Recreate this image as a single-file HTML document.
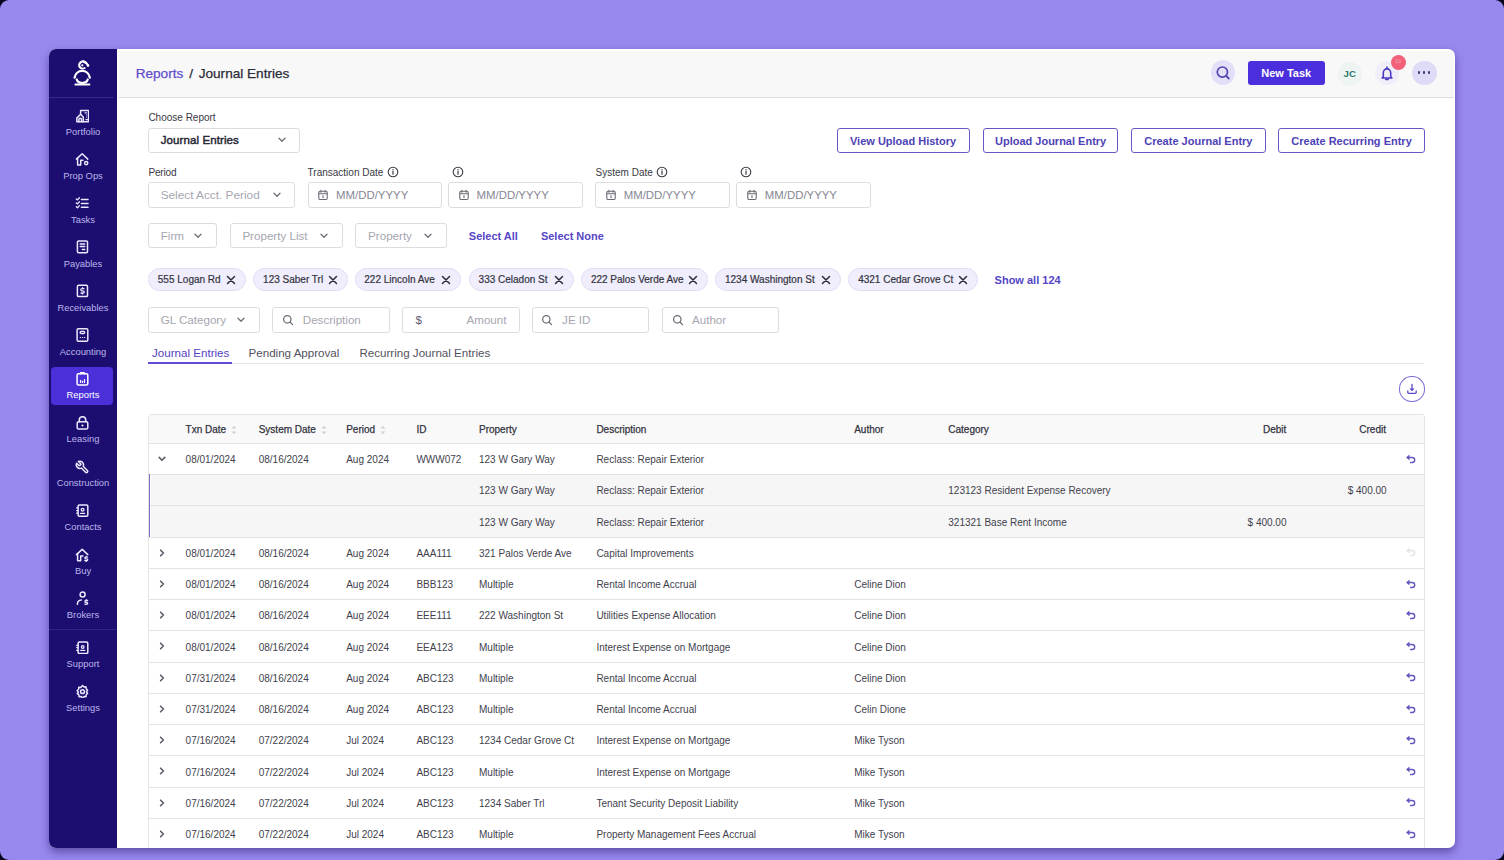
<!DOCTYPE html>
<html><head><meta charset="utf-8"><style>
*{box-sizing:border-box;margin:0;padding:0}
html{background:#08051e}
html,body{width:1504px;height:860px;overflow:hidden;}
body{background:#9889ef;border-radius:9px;font-family:"Liberation Sans",sans-serif;color:#2f2f3b}
.abs{position:absolute}
#frame{position:absolute;left:49px;top:49px;width:1406px;height:799px;border-radius:7px;overflow:hidden;background:#fff;box-shadow:0 4px 9px rgba(40,20,100,.5)}
.t{position:absolute;white-space:nowrap;line-height:1}
.box{position:absolute;border:1px solid #dcdcdc;border-radius:3px;background:#fff}
.fill{position:absolute}
</style></head><body>
<div id="frame">
<div class="fill" style="left:0px;top:0px;width:68px;height:799px;background:#1b0e70;border-radius:0"></div>
<div class="fill" style="left:0px;top:48px;width:64px;height:1px;background:#36298c"></div>
<div class="fill" style="left:0px;top:579.50px;width:68px;height:1px;background:#2f2388"></div>
<div class="fill" style="left:2px;top:318px;width:62px;height:38px;background:#4b30da;border-radius:4px"></div>
<svg class="abs" style="left:19px;top:7px;" width="28" height="34" viewBox="0 0 28 34" fill="none"><g stroke="#fff" stroke-width="2.1" stroke-linecap="round" fill="none">
<path d="M16.6 12 A3.5 3.5 0 1 1 17.4 6.9"/>
<path d="M14.6 5.3 C17 5.3 18.6 7 20 9.2"/>
<path d="M6.6 21.6 A7.7 8 0 0 1 21.8 21.6" stroke-width="2.3"/>
<path d="M8.7 23.4 A5.7 4.6 0 0 0 19.8 23.4" stroke-width="2.1"/>
<path d="M7.4 28.5 H21.4" stroke-width="2"/>
</g><circle cx="14.3" cy="9.3" r="1.1" fill="#fff"/><circle cx="20" cy="9.6" r="1.3" fill="#fff"/></svg>
<div class="t" style="left:-100px;width:268px;text-align:center;top:78.04px;font-size:9.4px;color:#bdb5ec">Portfolio</div>
<svg class="abs" style="left:26px;top:59.50px;" width="14" height="14" viewBox="0 0 14 14" fill="none"><g stroke="#ebe8ff" stroke-width="1.5" stroke-linecap="round" stroke-linejoin="round"><path d="M1.8 12.8V9.1L5.6 5.3V1.6h8v11.2z"/><path d="M3.9 12.8V10.6a1.3 1.3 0 0 1 2.6 0V12.8"/><path d="M5.6 5.3L8.3 8V12.8"/><path d="M10 3.8h.6M11.6 3.8h.1M11.7 5.9v.1M11.7 8v.1M10.9 10.5l.8.5.8-.5" stroke-width="1.2"/></g></svg>
<div class="t" style="left:-100px;width:268px;text-align:center;top:121.94px;font-size:9.4px;color:#bdb5ec">Prop Ops</div>
<svg class="abs" style="left:26px;top:103.40px;" width="14" height="14" viewBox="0 0 14 14" fill="none"><g stroke="#ebe8ff" stroke-width="1.5" stroke-linecap="round" stroke-linejoin="round"><path d="M1.4 7.1L7.2 1.8 12.8 7.1"/><path d="M2.6 6.2V13H5.7V8.3H8"/><circle cx="11.2" cy="11.1" r="1.6"/></g></svg>
<div class="t" style="left:-100px;width:268px;text-align:center;top:165.84px;font-size:9.4px;color:#bdb5ec">Tasks</div>
<svg class="abs" style="left:26px;top:147.30px;" width="14" height="14" viewBox="0 0 14 14" fill="none"><g stroke="#ebe8ff" stroke-width="1.5" stroke-linecap="round" stroke-linejoin="round"><path d="M6.4 3.4H13M6.4 7.4H13M6.4 11.2H13"/><path d="M1.3 2.9l1.2 1 1.9-2.1M1.3 6.9l1.2 1 1.9-2.1M1.3 10.7l1.2 1 1.9-2.1" stroke-width="1.3"/></g></svg>
<div class="t" style="left:-100px;width:268px;text-align:center;top:209.74px;font-size:9.4px;color:#bdb5ec">Payables</div>
<svg class="abs" style="left:26px;top:191.20px;" width="14" height="14" viewBox="0 0 14 14" fill="none"><g stroke="#ebe8ff" stroke-width="1.5" stroke-linecap="round" stroke-linejoin="round"><rect x="2.4" y="0.9" width="10.1" height="11.8" rx="1.2"/><path d="M5.2 4.1h4.5M5.2 6.6h4.5M7.3 9.4h2.4"/></g></svg>
<div class="t" style="left:-100px;width:268px;text-align:center;top:253.64px;font-size:9.4px;color:#bdb5ec">Receivables</div>
<svg class="abs" style="left:26px;top:235.10px;" width="14" height="14" viewBox="0 0 14 14" fill="none"><g stroke="#ebe8ff" stroke-width="1.5" stroke-linecap="round" stroke-linejoin="round"><rect x="2.4" y="1.2" width="10.1" height="11.4" rx="1.2"/><path d="M9 4.6H6.9a1.1 1.1 0 0 0 0 2.2h1.2a1.1 1.1 0 0 1 0 2.2H6M7.5 3.6v.9M7.5 9v.9" stroke-width="1.3"/></g></svg>
<div class="t" style="left:-100px;width:268px;text-align:center;top:297.54px;font-size:9.4px;color:#bdb5ec">Accounting</div>
<svg class="abs" style="left:26px;top:279px;" width="14" height="14" viewBox="0 0 14 14" fill="none"><g stroke="#ebe8ff" stroke-width="1.5" stroke-linecap="round" stroke-linejoin="round"><rect x="2.1" y="0.8" width="10.7" height="12.4" rx="1.3"/><rect x="5.1" y="3.5" width="4.6" height="2.1" rx="1" stroke-width="1.3"/><path d="M5.2 9.5h.3M7.4 9.5h.3M9.5 9.5h.3" stroke-width="1.2"/></g></svg>
<div class="t" style="left:-100px;width:268px;text-align:center;top:341.44px;font-size:9.4px;color:#fff">Reports</div>
<svg class="abs" style="left:26px;top:322.90px;" width="14" height="14" viewBox="0 0 14 14" fill="none"><g stroke="#fff" stroke-width="1.5" stroke-linecap="round" stroke-linejoin="round"><rect x="2.1" y="1.8" width="10.7" height="11.3" rx="1.4"/><path d="M5.6 1.8V.8h3.6v1"/><path d="M5.5 10.5V8.3M7.5 10.5V9M9.5 10.5V7.6" stroke-width="1.2"/></g></svg>
<div class="t" style="left:-100px;width:268px;text-align:center;top:385.34px;font-size:9.4px;color:#bdb5ec">Leasing</div>
<svg class="abs" style="left:26px;top:366.80px;" width="14" height="14" viewBox="0 0 14 14" fill="none"><g stroke="#ebe8ff" stroke-width="1.5" stroke-linecap="round" stroke-linejoin="round"><path d="M4.3 5.8V3.9a3.2 3.2 0 0 1 6.4 0v1.9"/><rect x="2.2" y="5.8" width="10.6" height="7.3" rx="1.4"/><circle cx="7.5" cy="9.5" r="1" fill="#fff" stroke="none"/></g></svg>
<div class="t" style="left:-100px;width:268px;text-align:center;top:429.24px;font-size:9.4px;color:#bdb5ec">Construction</div>
<svg class="abs" style="left:26px;top:410.70px;" width="14" height="14" viewBox="0 0 14 14" fill="none"><g stroke="#ebe8ff" stroke-width="1.5" stroke-linecap="round" stroke-linejoin="round"><g transform="translate(14.5,0) scale(-0.6,0.6)"><path d="M14.7 6.3a1 1 0 0 0 0 1.4l1.6 1.6a1 1 0 0 0 1.4 0l3.77-3.77a6 6 0 0 1-7.94 7.94l-6.91 6.91a2.12 2.12 0 0 1-3-3l6.91-6.91a6 6 0 0 1 7.94-7.94l-3.76 3.76z" stroke-width="2.5"/></g></g></svg>
<div class="t" style="left:-100px;width:268px;text-align:center;top:473.14px;font-size:9.4px;color:#bdb5ec">Contacts</div>
<svg class="abs" style="left:26px;top:454.60px;" width="14" height="14" viewBox="0 0 14 14" fill="none"><g stroke="#ebe8ff" stroke-width="1.5" stroke-linecap="round" stroke-linejoin="round"><rect x="3.1" y="0.9" width="9.7" height="11.3" rx="1.2"/><circle cx="7.6" cy="5.7" r="1.4" stroke-width="1.3"/><path d="M5.6 9.4h4" stroke-width="1.3"/><path d="M1.7 3.9h1.4M1.7 6.6h1.4M1.7 9.2h1.4" stroke-width="1.3"/></g></svg>
<div class="t" style="left:-100px;width:268px;text-align:center;top:517.04px;font-size:9.4px;color:#bdb5ec">Buy</div>
<svg class="abs" style="left:26px;top:498.50px;" width="14" height="14" viewBox="0 0 14 14" fill="none"><g stroke="#ebe8ff" stroke-width="1.5" stroke-linecap="round" stroke-linejoin="round"><path d="M1.4 6.6L7.2 1.4 12.8 6.6"/><path d="M2.6 5.7V12.7H5.7V8H8"/><path d="M12.6 9.1h-1.8a.9.9 0 0 0 0 1.8h1a.9.9 0 0 1 0 1.8H9.8M11.2 8.3v.6M11.2 12.8v.6" stroke-width="1.3"/></g></svg>
<div class="t" style="left:-100px;width:268px;text-align:center;top:560.94px;font-size:9.4px;color:#bdb5ec">Brokers</div>
<svg class="abs" style="left:26px;top:542.40px;" width="14" height="14" viewBox="0 0 14 14" fill="none"><g stroke="#ebe8ff" stroke-width="1.5" stroke-linecap="round" stroke-linejoin="round"><circle cx="7.6" cy="3.6" r="2.5"/><path d="M2.4 13.3c0-2.6 1.3-4.3 3.9-4.4"/><path d="M12.6 9.5h-1.8a.9.9 0 0 0 0 1.8h1a.9.9 0 0 1 0 1.8H9.8M11.2 8.7v.6M11.2 13.2v.6" stroke-width="1.3"/></g></svg>
<div class="t" style="left:-100px;width:268px;text-align:center;top:609.74px;font-size:9.4px;color:#bdb5ec">Support</div>
<svg class="abs" style="left:26px;top:591.20px;" width="14" height="14" viewBox="0 0 14 14" fill="none"><g stroke="#ebe8ff" stroke-width="1.5" stroke-linecap="round" stroke-linejoin="round"><rect x="3.1" y="2.1" width="9.7" height="11.3" rx="1.2"/><circle cx="7.7" cy="7" r="1.3" stroke-width="1.3"/><path d="M5.7 10.3h4" stroke-width="1.3"/><path d="M1.7 5.3h1.4M1.7 7.6h1.4M1.7 10.3h1.4" stroke-width="1.3"/></g></svg>
<div class="t" style="left:-100px;width:268px;text-align:center;top:653.64px;font-size:9.4px;color:#bdb5ec">Settings</div>
<svg class="abs" style="left:26px;top:635.10px;" width="14" height="14" viewBox="0 0 14 14" fill="none"><g stroke="#ebe8ff" stroke-width="1.5" stroke-linecap="round" stroke-linejoin="round"><circle cx="7.5" cy="7.7" r="1.9"/><path d="M7.5 1.6l1.5 1.3 2-.2.2 2 1.4 1.5-1.2 1.5 1.2 1.5-1.4 1.5-.2 2-2-.2-1.5 1.3-1.5-1.3-2 .2-.2-2L2.2 9.7l1.2-1.5-1.2-1.5 1.4-1.5.2-2 2 .2z"/></g></svg>
<div class="fill" style="left:69.50px;top:1.50px;width:1335.50px;height:47.30px;background:#f8f8f8;border-bottom:1px solid #dedede"></div>
<div class="t " style="left:86.70px;top:17.54px;font-size:13.6px;color:#5e4ccb;-webkit-text-stroke:.25px #5e4ccb">Reports</div>
<div class="t " style="left:140.30px;top:17.54px;font-size:13.6px;color:#2a2a38;-webkit-text-stroke:.25px #2a2a38">/</div>
<div class="t " style="left:149.70px;top:17.54px;font-size:13.6px;color:#2a2a38;-webkit-text-stroke:.25px #2a2a38">Journal Entries</div>
<div class="fill" style="left:1161.60px;top:11.30px;width:24.80px;height:24.80px;background:#e3dff9;border-radius:50%"></div>
<svg class="abs" style="left:1166px;top:15px;" width="16" height="16" viewBox="0 0 16 16" fill="none"><circle cx="7.4" cy="8.1" r="5.1" stroke="#4f43ac" stroke-width="1.7"/><path d="M11.2 11.9l2.6 2.6" stroke="#4f43ac" stroke-width="1.8" stroke-linecap="round"/></svg>
<div class="fill" style="left:1199px;top:11.50px;width:76.50px;height:24.50px;background:#4b2fdc;border-radius:3px"></div>
<div class="t " style="left:1037.20px;width:400px;text-align:center;top:18.61px;font-size:11px;color:#fff;font-weight:700">New Task</div>
<div class="fill" style="left:1288.50px;top:12.50px;width:24px;height:24px;background:#eef4f2;border-radius:50%"></div>
<div class="t " style="left:1100.70px;width:400px;text-align:center;top:19.90px;font-size:9.6px;color:#2c7a6c;font-weight:700">JC</div>
<div class="fill" style="left:1326px;top:12px;width:24px;height:24px;background:#f0eef8;border-radius:50%"></div>
<svg class="abs" style="left:1331px;top:15.50px;" width="14" height="16" viewBox="0 0 14 16" fill="none"><path d="M3.3 11.8V7.6a3.7 3.7 0 0 1 7.4 0v4.2l1.2 1.2H2.1z" stroke="#4a3bc0" stroke-width="1.6" stroke-linejoin="round"/><path d="M7 2v1.2M5.8 14.4h2.4" stroke="#4a3bc0" stroke-width="1.6" stroke-linecap="round"/></svg>
<div class="fill" style="left:1341.50px;top:5.50px;width:15px;height:15px;background:#f2607a;border-radius:50%"></div>
<div class="t " style="left:1149px;width:400px;text-align:center;top:10.30px;font-size:5.5px;color:#f8a8b8">10</div>
<div class="fill" style="left:1363px;top:11.50px;width:24.50px;height:24.50px;background:#dedbf6;border-radius:50%"></div>
<div class="fill" style="left:1368.90px;top:22.40px;width:2.60px;height:2.60px;background:#3e3478;border-radius:50%"></div>
<div class="fill" style="left:1373.90px;top:22.40px;width:2.60px;height:2.60px;background:#3e3478;border-radius:50%"></div>
<div class="fill" style="left:1378.90px;top:22.40px;width:2.60px;height:2.60px;background:#3e3478;border-radius:50%"></div>
<div class="t " style="left:99.40px;top:64.40px;font-size:10px;color:#383842">Choose Report</div>
<div class="box" style="left:99.40px;top:79.30px;width:152.10px;height:24.30px;"></div>
<div class="t " style="left:111.70px;top:85.97px;font-size:11.5px;color:#262634;-webkit-text-stroke:.45px #262634;letter-spacing:.1px">Journal Entries</div>
<svg class="abs" style="left:228px;top:87.30px;" width="10" height="8" viewBox="0 0 10 8" fill="none"><path d="M2 2.2l3 3 3-3" stroke="#6f6f78" stroke-width="1.3" stroke-linecap="round" stroke-linejoin="round"/></svg>
<div class="t " style="left:99.40px;top:118.80px;font-size:10px;color:#383842;letter-spacing:-.15px">Period</div>
<div class="t " style="left:258.60px;top:118.80px;font-size:10px;color:#383842">Transaction Date</div>
<svg class="abs" style="left:337.70px;top:117px;" width="12" height="12" viewBox="0 0 12 12" fill="none"><circle cx="6" cy="6" r="4.8" stroke="#3a3a44" stroke-width="1.1"/><path d="M6 5.4v2.8" stroke="#3a3a44" stroke-width="1.2" stroke-linecap="round"/><circle cx="6" cy="3.7" r=".7" fill="#3a3a44"/></svg>
<svg class="abs" style="left:402.60px;top:117px;" width="12" height="12" viewBox="0 0 12 12" fill="none"><circle cx="6" cy="6" r="4.8" stroke="#3a3a44" stroke-width="1.1"/><path d="M6 5.4v2.8" stroke="#3a3a44" stroke-width="1.2" stroke-linecap="round"/><circle cx="6" cy="3.7" r=".7" fill="#3a3a44"/></svg>
<div class="t " style="left:546.60px;top:118.80px;font-size:10px;color:#383842">System Date</div>
<svg class="abs" style="left:606.50px;top:117px;" width="12" height="12" viewBox="0 0 12 12" fill="none"><circle cx="6" cy="6" r="4.8" stroke="#3a3a44" stroke-width="1.1"/><path d="M6 5.4v2.8" stroke="#3a3a44" stroke-width="1.2" stroke-linecap="round"/><circle cx="6" cy="3.7" r=".7" fill="#3a3a44"/></svg>
<svg class="abs" style="left:690.70px;top:117px;" width="12" height="12" viewBox="0 0 12 12" fill="none"><circle cx="6" cy="6" r="4.8" stroke="#3a3a44" stroke-width="1.1"/><path d="M6 5.4v2.8" stroke="#3a3a44" stroke-width="1.2" stroke-linecap="round"/><circle cx="6" cy="3.7" r=".7" fill="#3a3a44"/></svg>
<div class="box" style="left:99.40px;top:133.40px;width:146.60px;height:25.20px;"></div>
<div class="t " style="left:111.70px;top:141.22px;font-size:11.8px;color:#a6a6b0">Select Acct. Period</div>
<svg class="abs" style="left:222.50px;top:142px;" width="10" height="8" viewBox="0 0 10 8" fill="none"><path d="M2 2.2l3 3 3-3" stroke="#6f6f78" stroke-width="1.3" stroke-linecap="round" stroke-linejoin="round"/></svg>
<div class="box" style="left:258.60px;top:133.40px;width:134.40px;height:25.20px;"></div>
<svg class="abs" style="left:268.10px;top:140px;" width="12" height="12" viewBox="0 0 12 12" fill="none"><rect x="1.8" y="2.3" width="8.4" height="8.2" rx="1.2" stroke="#6b6b76" stroke-width="1.1"/><path d="M1.8 4.8h8.4M4 1.3v2M8 1.3v2M6 6.5v2.3" stroke="#6b6b76" stroke-width="1.1" stroke-linecap="round"/></svg>
<div class="t " style="left:287.10px;top:141.21px;font-size:11.4px;color:#868694">MM/DD/YYYY</div>
<div class="box" style="left:399.20px;top:133.40px;width:135.20px;height:25.20px;"></div>
<svg class="abs" style="left:409.30px;top:140px;" width="12" height="12" viewBox="0 0 12 12" fill="none"><rect x="1.8" y="2.3" width="8.4" height="8.2" rx="1.2" stroke="#6b6b76" stroke-width="1.1"/><path d="M1.8 4.8h8.4M4 1.3v2M8 1.3v2M6 6.5v2.3" stroke="#6b6b76" stroke-width="1.1" stroke-linecap="round"/></svg>
<div class="t " style="left:427.60px;top:141.21px;font-size:11.4px;color:#868694">MM/DD/YYYY</div>
<div class="box" style="left:546px;top:133.40px;width:135.20px;height:25.20px;"></div>
<svg class="abs" style="left:556.20px;top:140px;" width="12" height="12" viewBox="0 0 12 12" fill="none"><rect x="1.8" y="2.3" width="8.4" height="8.2" rx="1.2" stroke="#6b6b76" stroke-width="1.1"/><path d="M1.8 4.8h8.4M4 1.3v2M8 1.3v2M6 6.5v2.3" stroke="#6b6b76" stroke-width="1.1" stroke-linecap="round"/></svg>
<div class="t " style="left:574.70px;top:141.21px;font-size:11.4px;color:#868694">MM/DD/YYYY</div>
<div class="box" style="left:687px;top:133.40px;width:135px;height:25.20px;"></div>
<svg class="abs" style="left:696.60px;top:140px;" width="12" height="12" viewBox="0 0 12 12" fill="none"><rect x="1.8" y="2.3" width="8.4" height="8.2" rx="1.2" stroke="#6b6b76" stroke-width="1.1"/><path d="M1.8 4.8h8.4M4 1.3v2M8 1.3v2M6 6.5v2.3" stroke="#6b6b76" stroke-width="1.1" stroke-linecap="round"/></svg>
<div class="t " style="left:715.80px;top:141.21px;font-size:11.4px;color:#868694">MM/DD/YYYY</div>
<div class="box" style="left:99.20px;top:174px;width:68.40px;height:25.40px;"></div>
<div class="t " style="left:111.75px;top:181.02px;font-size:11.6px;color:#a6a6b0">Firm</div>
<svg class="abs" style="left:144.10px;top:182.70px;" width="10" height="8" viewBox="0 0 10 8" fill="none"><path d="M2 2.2l3 3 3-3" stroke="#6f6f78" stroke-width="1.3" stroke-linecap="round" stroke-linejoin="round"/></svg>
<div class="box" style="left:180.60px;top:174px;width:113.20px;height:25.40px;"></div>
<div class="t " style="left:193.40px;top:181.02px;font-size:11.6px;color:#a6a6b0">Property List</div>
<svg class="abs" style="left:270.30px;top:182.70px;" width="10" height="8" viewBox="0 0 10 8" fill="none"><path d="M2 2.2l3 3 3-3" stroke="#6f6f78" stroke-width="1.3" stroke-linecap="round" stroke-linejoin="round"/></svg>
<div class="box" style="left:306px;top:174px;width:91.80px;height:25.40px;"></div>
<div class="t " style="left:319.10px;top:181.02px;font-size:11.6px;color:#a6a6b0">Property</div>
<svg class="abs" style="left:374.20px;top:182.70px;" width="10" height="8" viewBox="0 0 10 8" fill="none"><path d="M2 2.2l3 3 3-3" stroke="#6f6f78" stroke-width="1.3" stroke-linecap="round" stroke-linejoin="round"/></svg>
<div class="t " style="left:419.80px;top:182.01px;font-size:11px;color:#5646c6;font-weight:700">Select All</div>
<div class="t " style="left:491.90px;top:182.01px;font-size:11px;color:#5646c6;font-weight:700">Select None</div>
<div class="box" style="left:787.50px;top:79.20px;width:133.10px;height:24.80px;border:1px solid #6659c6;border-radius:3px"></div>
<div class="t " style="left:654.05px;width:400px;text-align:center;top:86.51px;font-size:11px;color:#4e42b6;font-weight:700">View Upload History</div>
<div class="box" style="left:933.80px;top:79.20px;width:135.60px;height:24.80px;border:1px solid #6659c6;border-radius:3px"></div>
<div class="t " style="left:801.60px;width:400px;text-align:center;top:86.51px;font-size:11px;color:#4e42b6;font-weight:700">Upload Journal Entry</div>
<div class="box" style="left:1082.20px;top:79.20px;width:134.40px;height:24.80px;border:1px solid #6659c6;border-radius:3px"></div>
<div class="t " style="left:949.40px;width:400px;text-align:center;top:86.51px;font-size:11px;color:#4e42b6;font-weight:700">Create Journal Entry</div>
<div class="box" style="left:1229.40px;top:79.20px;width:146.30px;height:24.80px;border:1px solid #6659c6;border-radius:3px"></div>
<div class="t " style="left:1102.55px;width:400px;text-align:center;top:86.51px;font-size:11px;color:#4e42b6;font-weight:700">Create Recurring Entry</div>
<div class="box" style="left:99px;top:219px;width:98.30px;height:22.80px;background:#f0eefc;border:1px solid #e0dcf5;border-radius:12px"></div>
<div class="t " style="left:108.80px;top:225.70px;font-size:10px;color:#33333e;-webkit-text-stroke:.2px #33333e">555 Logan Rd</div>
<svg class="abs" style="left:177px;top:225.60px;" width="10" height="10" viewBox="0 0 10 10" fill="none"><path d="M1.5 1.5l7 7M8.5 1.5l-7 7" stroke="#2c2c36" stroke-width="1.5" stroke-linecap="round"/></svg>
<div class="box" style="left:204.30px;top:219px;width:94.80px;height:22.80px;background:#f0eefc;border:1px solid #e0dcf5;border-radius:12px"></div>
<div class="t " style="left:214.10px;top:225.70px;font-size:10px;color:#33333e;-webkit-text-stroke:.2px #33333e">123 Saber Trl</div>
<svg class="abs" style="left:278.80px;top:225.60px;" width="10" height="10" viewBox="0 0 10 10" fill="none"><path d="M1.5 1.5l7 7M8.5 1.5l-7 7" stroke="#2c2c36" stroke-width="1.5" stroke-linecap="round"/></svg>
<div class="box" style="left:305.50px;top:219px;width:106.30px;height:22.80px;background:#f0eefc;border:1px solid #e0dcf5;border-radius:12px"></div>
<div class="t " style="left:315.30px;top:225.70px;font-size:10px;color:#33333e;-webkit-text-stroke:.2px #33333e">222 Lincoln Ave</div>
<svg class="abs" style="left:391.50px;top:225.60px;" width="10" height="10" viewBox="0 0 10 10" fill="none"><path d="M1.5 1.5l7 7M8.5 1.5l-7 7" stroke="#2c2c36" stroke-width="1.5" stroke-linecap="round"/></svg>
<div class="box" style="left:419.80px;top:219px;width:105.30px;height:22.80px;background:#f0eefc;border:1px solid #e0dcf5;border-radius:12px"></div>
<div class="t " style="left:429.60px;top:225.70px;font-size:10px;color:#33333e;-webkit-text-stroke:.2px #33333e">333 Celadon St</div>
<svg class="abs" style="left:504.80px;top:225.60px;" width="10" height="10" viewBox="0 0 10 10" fill="none"><path d="M1.5 1.5l7 7M8.5 1.5l-7 7" stroke="#2c2c36" stroke-width="1.5" stroke-linecap="round"/></svg>
<div class="box" style="left:532.10px;top:219px;width:127.20px;height:22.80px;background:#f0eefc;border:1px solid #e0dcf5;border-radius:12px"></div>
<div class="t " style="left:541.90px;top:225.70px;font-size:10px;color:#33333e;-webkit-text-stroke:.2px #33333e">222 Palos Verde Ave</div>
<svg class="abs" style="left:639px;top:225.60px;" width="10" height="10" viewBox="0 0 10 10" fill="none"><path d="M1.5 1.5l7 7M8.5 1.5l-7 7" stroke="#2c2c36" stroke-width="1.5" stroke-linecap="round"/></svg>
<div class="box" style="left:666.20px;top:219px;width:126.20px;height:22.80px;background:#f0eefc;border:1px solid #e0dcf5;border-radius:12px"></div>
<div class="t " style="left:676px;top:225.70px;font-size:10px;color:#33333e;-webkit-text-stroke:.2px #33333e">1234 Washington St</div>
<svg class="abs" style="left:772.10px;top:225.60px;" width="10" height="10" viewBox="0 0 10 10" fill="none"><path d="M1.5 1.5l7 7M8.5 1.5l-7 7" stroke="#2c2c36" stroke-width="1.5" stroke-linecap="round"/></svg>
<div class="box" style="left:799.40px;top:219px;width:129.60px;height:22.80px;background:#f0eefc;border:1px solid #e0dcf5;border-radius:12px"></div>
<div class="t " style="left:809.20px;top:225.70px;font-size:10px;color:#33333e;-webkit-text-stroke:.2px #33333e">4321 Cedar Grove Ct</div>
<svg class="abs" style="left:908.70px;top:225.60px;" width="10" height="10" viewBox="0 0 10 10" fill="none"><path d="M1.5 1.5l7 7M8.5 1.5l-7 7" stroke="#2c2c36" stroke-width="1.5" stroke-linecap="round"/></svg>
<div class="t " style="left:945.60px;top:225.61px;font-size:11px;color:#5646c6;font-weight:700">Show all 124</div>
<div class="box" style="left:99px;top:258.40px;width:112.20px;height:25.80px;"></div>
<div class="t " style="left:111.70px;top:264.92px;font-size:11.6px;color:#a6a6b0">GL Category</div>
<svg class="abs" style="left:187px;top:267.30px;" width="10" height="8" viewBox="0 0 10 8" fill="none"><path d="M2 2.2l3 3 3-3" stroke="#6f6f78" stroke-width="1.3" stroke-linecap="round" stroke-linejoin="round"/></svg>
<div class="box" style="left:223.40px;top:258.40px;width:117.60px;height:25.80px;"></div>
<svg class="abs" style="left:232.60px;top:265.30px;" width="12" height="12" viewBox="0 0 12 12" fill="none"><circle cx="5.3" cy="5.3" r="3.7" stroke="#6b6b76" stroke-width="1.25"/><path d="M8.2 8.2l2.4 2.4" stroke="#6b6b76" stroke-width="1.25" stroke-linecap="round"/></svg>
<div class="t " style="left:253.80px;top:264.92px;font-size:11.6px;color:#a6a6b0">Description</div>
<div class="box" style="left:353px;top:258.40px;width:117.50px;height:25.80px;"></div>
<div class="t " style="left:169.70px;width:400px;text-align:center;top:264.92px;font-size:11.6px;color:#5b5b70">$</div>
<div class="t " style="right:948.50px;top:264.92px;font-size:11.6px;color:#a6a6b0">Amount</div>
<div class="box" style="left:482.80px;top:258.40px;width:117.60px;height:25.80px;"></div>
<svg class="abs" style="left:492.20px;top:265.30px;" width="12" height="12" viewBox="0 0 12 12" fill="none"><circle cx="5.3" cy="5.3" r="3.7" stroke="#6b6b76" stroke-width="1.25"/><path d="M8.2 8.2l2.4 2.4" stroke="#6b6b76" stroke-width="1.25" stroke-linecap="round"/></svg>
<div class="t " style="left:513.10px;top:264.92px;font-size:11.6px;color:#a6a6b0">JE ID</div>
<div class="box" style="left:612.70px;top:258.40px;width:117.60px;height:25.80px;"></div>
<svg class="abs" style="left:622.50px;top:265.30px;" width="12" height="12" viewBox="0 0 12 12" fill="none"><circle cx="5.3" cy="5.3" r="3.7" stroke="#6b6b76" stroke-width="1.25"/><path d="M8.2 8.2l2.4 2.4" stroke="#6b6b76" stroke-width="1.25" stroke-linecap="round"/></svg>
<div class="t " style="left:643px;top:264.92px;font-size:11.6px;color:#a6a6b0">Author</div>
<div class="t " style="left:103px;top:297.92px;font-size:11.6px;color:#5442c2">Journal Entries</div>
<div class="t " style="left:199.50px;top:297.92px;font-size:11.6px;color:#52525d">Pending Approval</div>
<div class="t " style="left:310.40px;top:297.92px;font-size:11.6px;color:#52525d">Recurring Journal Entries</div>
<div class="fill" style="left:99px;top:314px;width:1276.20px;height:1px;background:#e3e3e3"></div>
<div class="fill" style="left:99px;top:312.80px;width:84.30px;height:1.90px;background:#5e4dd2"></div>
<div class="fill" style="left:1350.40px;top:327.30px;width:25.40px;height:25.30px;border:1.3px solid #7a6cd6;border-radius:50%;background:#fff"></div>
<svg class="abs" style="left:1356px;top:333px;" width="14" height="14" viewBox="0 0 14 14" fill="none"><path d="M7 2.4v5.6" stroke="#5a4bc8" stroke-width="1.3" stroke-linecap="round"/><path d="M4.3 6.4L7 9.3l2.7-2.9z" fill="#5a4bc8"/><path d="M2.8 8.9v1.6a.8.8 0 0 0 .8.8h6.8a.8.8 0 0 0 .8-.8V8.9" stroke="#5a4bc8" stroke-width="1.3" stroke-linecap="round"/></svg>
<div class="fill" style="left:98.60px;top:365.30px;width:1277.40px;height:485.70px;border:1px solid #e4e4e4;border-radius:3px 3px 0 0;background:#fff"></div>
<div class="fill" style="left:99.60px;top:366.30px;width:1275.40px;height:29px;background:#f9f9f9;border-bottom:1px solid #e4e4e4"></div>
<div class="t " style="left:136.60px;top:375.70px;font-size:10px;color:#33333f;-webkit-text-stroke:.25px #33333f">Txn Date</div>
<svg class="abs" style="left:180.50px;top:374.60px;" width="8" height="12" viewBox="0 0 8 12" fill="none"><path d="M1.7 4.6L4 1.8l2.3 2.8z M1.7 7.4L4 10.2l2.3-2.8z" fill="#cfcfd4"/></svg>
<div class="t " style="left:209.70px;top:375.70px;font-size:10px;color:#33333f;-webkit-text-stroke:.25px #33333f">System Date</div>
<svg class="abs" style="left:271px;top:374.60px;" width="8" height="12" viewBox="0 0 8 12" fill="none"><path d="M1.7 4.6L4 1.8l2.3 2.8z M1.7 7.4L4 10.2l2.3-2.8z" fill="#cfcfd4"/></svg>
<div class="t " style="left:297.20px;top:375.70px;font-size:10px;color:#33333f;-webkit-text-stroke:.25px #33333f">Period</div>
<svg class="abs" style="left:329.60px;top:374.60px;" width="8" height="12" viewBox="0 0 8 12" fill="none"><path d="M1.7 4.6L4 1.8l2.3 2.8z M1.7 7.4L4 10.2l2.3-2.8z" fill="#cfcfd4"/></svg>
<div class="t " style="left:367.40px;top:375.70px;font-size:10px;color:#33333f;-webkit-text-stroke:.25px #33333f">ID</div>
<div class="t " style="left:430px;top:375.70px;font-size:10px;color:#33333f;-webkit-text-stroke:.25px #33333f">Property</div>
<div class="t " style="left:547.40px;top:375.70px;font-size:10px;color:#33333f;-webkit-text-stroke:.25px #33333f">Description</div>
<div class="t " style="left:805.20px;top:375.70px;font-size:10px;color:#33333f;-webkit-text-stroke:.25px #33333f">Author</div>
<div class="t " style="left:899.30px;top:375.70px;font-size:10px;color:#33333f;-webkit-text-stroke:.25px #33333f">Category</div>
<div class="t " style="right:168.70px;top:375.70px;font-size:10px;color:#33333f;-webkit-text-stroke:.25px #33333f">Debit</div>
<div class="t " style="right:69px;top:375.70px;font-size:10px;color:#33333f;-webkit-text-stroke:.25px #33333f">Credit</div>
<div class="fill" style="left:99.60px;top:425.05px;width:1275.40px;height:1px;background:#e4e4e4"></div>
<svg class="abs" style="left:107.70px;top:405.93px;" width="10" height="8" viewBox="0 0 10 8" fill="none"><path d="M2.2 2.4l2.8 2.8 2.8-2.8" stroke="#5a5a68" stroke-width="1.6" stroke-linecap="round" stroke-linejoin="round"/></svg>
<div class="t " style="left:136.60px;top:406.03px;font-size:10px;color:#3f3f4d">08/01/2024</div>
<div class="t " style="left:209.70px;top:406.03px;font-size:10px;color:#3f3f4d">08/16/2024</div>
<div class="t " style="left:297.20px;top:406.03px;font-size:10px;color:#3f3f4d">Aug 2024</div>
<div class="t " style="left:367.40px;top:406.03px;font-size:10px;color:#3f3f4d">WWW072</div>
<div class="t " style="left:430px;top:406.03px;font-size:10px;color:#3f3f4d">123 W Gary Way</div>
<div class="t " style="left:547.40px;top:406.03px;font-size:10px;color:#3f3f4d">Reclass: Repair Exterior</div>
<svg class="abs" style="left:1356px;top:403.73px;" width="12" height="12" viewBox="0 0 12 12" fill="none"><path d="M4.2 2.2L1.4 4.5l2.8 2.3z" fill="#6258bf" stroke="#6258bf" stroke-width=".6" stroke-linejoin="round"/><path d="M3 4.5h4.2a2.5 2.5 0 0 1 0 5H5.6" stroke="#6258bf" stroke-width="1.35" stroke-linecap="round"/></svg>
<div class="fill" style="left:101.80px;top:425.55px;width:1273.20px;height:31.25px;background:#f6f6f6"></div>
<div class="fill" style="left:99.60px;top:456.30px;width:1275.40px;height:1px;background:#e4e4e4"></div>
<div class="t " style="left:430px;top:437.28px;font-size:10px;color:#3f3f4d">123 W Gary Way</div>
<div class="t " style="left:547.40px;top:437.28px;font-size:10px;color:#3f3f4d">Reclass: Repair Exterior</div>
<div class="t " style="left:899.30px;top:437.28px;font-size:10px;color:#3f3f4d">123123 Resident Expense Recovery</div>
<div class="t " style="right:68.40px;top:437.28px;font-size:10px;color:#3f3f4d">$ 400.00</div>
<div class="fill" style="left:101.80px;top:456.80px;width:1273.20px;height:31.25px;background:#f6f6f6"></div>
<div class="fill" style="left:99.60px;top:487.55px;width:1275.40px;height:1px;background:#e4e4e4"></div>
<div class="t " style="left:430px;top:468.52px;font-size:10px;color:#3f3f4d">123 W Gary Way</div>
<div class="t " style="left:547.40px;top:468.52px;font-size:10px;color:#3f3f4d">Reclass: Repair Exterior</div>
<div class="t " style="left:899.30px;top:468.52px;font-size:10px;color:#3f3f4d">321321 Base Rent Income</div>
<div class="t " style="right:168.50px;top:468.52px;font-size:10px;color:#3f3f4d">$ 400.00</div>
<div class="fill" style="left:99.60px;top:518.80px;width:1275.40px;height:1px;background:#e4e4e4"></div>
<svg class="abs" style="left:108.70px;top:498.67px;" width="8" height="10" viewBox="0 0 8 10" fill="none"><path d="M2.6 2.2l2.8 2.8-2.8 2.8" stroke="#5a5a68" stroke-width="1.6" stroke-linecap="round" stroke-linejoin="round"/></svg>
<div class="t " style="left:136.60px;top:499.77px;font-size:10px;color:#3f3f4d">08/01/2024</div>
<div class="t " style="left:209.70px;top:499.77px;font-size:10px;color:#3f3f4d">08/16/2024</div>
<div class="t " style="left:297.20px;top:499.77px;font-size:10px;color:#3f3f4d">Aug 2024</div>
<div class="t " style="left:367.40px;top:499.77px;font-size:10px;color:#3f3f4d">AAA111</div>
<div class="t " style="left:430px;top:499.77px;font-size:10px;color:#3f3f4d">321 Palos Verde Ave</div>
<div class="t " style="left:547.40px;top:499.77px;font-size:10px;color:#3f3f4d">Capital Improvements</div>
<svg class="abs" style="left:1356px;top:497.47px;" width="12" height="12" viewBox="0 0 12 12" fill="none"><path d="M4.2 2.2L1.4 4.5l2.8 2.3z" fill="#e4e4ea" stroke="#e4e4ea" stroke-width=".6" stroke-linejoin="round"/><path d="M3 4.5h4.2a2.5 2.5 0 0 1 0 5H5.6" stroke="#e4e4ea" stroke-width="1.35" stroke-linecap="round"/></svg>
<div class="fill" style="left:99.60px;top:550.05px;width:1275.40px;height:1px;background:#e4e4e4"></div>
<svg class="abs" style="left:108.70px;top:529.92px;" width="8" height="10" viewBox="0 0 8 10" fill="none"><path d="M2.6 2.2l2.8 2.8-2.8 2.8" stroke="#5a5a68" stroke-width="1.6" stroke-linecap="round" stroke-linejoin="round"/></svg>
<div class="t " style="left:136.60px;top:531.02px;font-size:10px;color:#3f3f4d">08/01/2024</div>
<div class="t " style="left:209.70px;top:531.02px;font-size:10px;color:#3f3f4d">08/16/2024</div>
<div class="t " style="left:297.20px;top:531.02px;font-size:10px;color:#3f3f4d">Aug 2024</div>
<div class="t " style="left:367.40px;top:531.02px;font-size:10px;color:#3f3f4d">BBB123</div>
<div class="t " style="left:430px;top:531.02px;font-size:10px;color:#3f3f4d">Multiple</div>
<div class="t " style="left:547.40px;top:531.02px;font-size:10px;color:#3f3f4d">Rental Income Accrual</div>
<div class="t " style="left:805.20px;top:531.02px;font-size:10px;color:#3f3f4d">Celine Dion</div>
<svg class="abs" style="left:1356px;top:528.72px;" width="12" height="12" viewBox="0 0 12 12" fill="none"><path d="M4.2 2.2L1.4 4.5l2.8 2.3z" fill="#6258bf" stroke="#6258bf" stroke-width=".6" stroke-linejoin="round"/><path d="M3 4.5h4.2a2.5 2.5 0 0 1 0 5H5.6" stroke="#6258bf" stroke-width="1.35" stroke-linecap="round"/></svg>
<div class="fill" style="left:99.60px;top:581.30px;width:1275.40px;height:1px;background:#e4e4e4"></div>
<svg class="abs" style="left:108.70px;top:561.17px;" width="8" height="10" viewBox="0 0 8 10" fill="none"><path d="M2.6 2.2l2.8 2.8-2.8 2.8" stroke="#5a5a68" stroke-width="1.6" stroke-linecap="round" stroke-linejoin="round"/></svg>
<div class="t " style="left:136.60px;top:562.27px;font-size:10px;color:#3f3f4d">08/01/2024</div>
<div class="t " style="left:209.70px;top:562.27px;font-size:10px;color:#3f3f4d">08/16/2024</div>
<div class="t " style="left:297.20px;top:562.27px;font-size:10px;color:#3f3f4d">Aug 2024</div>
<div class="t " style="left:367.40px;top:562.27px;font-size:10px;color:#3f3f4d">EEE111</div>
<div class="t " style="left:430px;top:562.27px;font-size:10px;color:#3f3f4d">222 Washington St</div>
<div class="t " style="left:547.40px;top:562.27px;font-size:10px;color:#3f3f4d">Utilities Expense Allocation</div>
<div class="t " style="left:805.20px;top:562.27px;font-size:10px;color:#3f3f4d">Celine Dion</div>
<svg class="abs" style="left:1356px;top:559.97px;" width="12" height="12" viewBox="0 0 12 12" fill="none"><path d="M4.2 2.2L1.4 4.5l2.8 2.3z" fill="#6258bf" stroke="#6258bf" stroke-width=".6" stroke-linejoin="round"/><path d="M3 4.5h4.2a2.5 2.5 0 0 1 0 5H5.6" stroke="#6258bf" stroke-width="1.35" stroke-linecap="round"/></svg>
<div class="fill" style="left:99.60px;top:612.55px;width:1275.40px;height:1px;background:#e4e4e4"></div>
<svg class="abs" style="left:108.70px;top:592.42px;" width="8" height="10" viewBox="0 0 8 10" fill="none"><path d="M2.6 2.2l2.8 2.8-2.8 2.8" stroke="#5a5a68" stroke-width="1.6" stroke-linecap="round" stroke-linejoin="round"/></svg>
<div class="t " style="left:136.60px;top:593.52px;font-size:10px;color:#3f3f4d">08/01/2024</div>
<div class="t " style="left:209.70px;top:593.52px;font-size:10px;color:#3f3f4d">08/16/2024</div>
<div class="t " style="left:297.20px;top:593.52px;font-size:10px;color:#3f3f4d">Aug 2024</div>
<div class="t " style="left:367.40px;top:593.52px;font-size:10px;color:#3f3f4d">EEA123</div>
<div class="t " style="left:430px;top:593.52px;font-size:10px;color:#3f3f4d">Multiple</div>
<div class="t " style="left:547.40px;top:593.52px;font-size:10px;color:#3f3f4d">Interest Expense on Mortgage</div>
<div class="t " style="left:805.20px;top:593.52px;font-size:10px;color:#3f3f4d">Celine Dion</div>
<svg class="abs" style="left:1356px;top:591.22px;" width="12" height="12" viewBox="0 0 12 12" fill="none"><path d="M4.2 2.2L1.4 4.5l2.8 2.3z" fill="#6258bf" stroke="#6258bf" stroke-width=".6" stroke-linejoin="round"/><path d="M3 4.5h4.2a2.5 2.5 0 0 1 0 5H5.6" stroke="#6258bf" stroke-width="1.35" stroke-linecap="round"/></svg>
<div class="fill" style="left:99.60px;top:643.80px;width:1275.40px;height:1px;background:#e4e4e4"></div>
<svg class="abs" style="left:108.70px;top:623.67px;" width="8" height="10" viewBox="0 0 8 10" fill="none"><path d="M2.6 2.2l2.8 2.8-2.8 2.8" stroke="#5a5a68" stroke-width="1.6" stroke-linecap="round" stroke-linejoin="round"/></svg>
<div class="t " style="left:136.60px;top:624.77px;font-size:10px;color:#3f3f4d">07/31/2024</div>
<div class="t " style="left:209.70px;top:624.77px;font-size:10px;color:#3f3f4d">08/16/2024</div>
<div class="t " style="left:297.20px;top:624.77px;font-size:10px;color:#3f3f4d">Aug 2024</div>
<div class="t " style="left:367.40px;top:624.77px;font-size:10px;color:#3f3f4d">ABC123</div>
<div class="t " style="left:430px;top:624.77px;font-size:10px;color:#3f3f4d">Multiple</div>
<div class="t " style="left:547.40px;top:624.77px;font-size:10px;color:#3f3f4d">Rental Income Accrual</div>
<div class="t " style="left:805.20px;top:624.77px;font-size:10px;color:#3f3f4d">Celine Dion</div>
<svg class="abs" style="left:1356px;top:622.47px;" width="12" height="12" viewBox="0 0 12 12" fill="none"><path d="M4.2 2.2L1.4 4.5l2.8 2.3z" fill="#6258bf" stroke="#6258bf" stroke-width=".6" stroke-linejoin="round"/><path d="M3 4.5h4.2a2.5 2.5 0 0 1 0 5H5.6" stroke="#6258bf" stroke-width="1.35" stroke-linecap="round"/></svg>
<div class="fill" style="left:99.60px;top:675.05px;width:1275.40px;height:1px;background:#e4e4e4"></div>
<svg class="abs" style="left:108.70px;top:654.92px;" width="8" height="10" viewBox="0 0 8 10" fill="none"><path d="M2.6 2.2l2.8 2.8-2.8 2.8" stroke="#5a5a68" stroke-width="1.6" stroke-linecap="round" stroke-linejoin="round"/></svg>
<div class="t " style="left:136.60px;top:656.02px;font-size:10px;color:#3f3f4d">07/31/2024</div>
<div class="t " style="left:209.70px;top:656.02px;font-size:10px;color:#3f3f4d">08/16/2024</div>
<div class="t " style="left:297.20px;top:656.02px;font-size:10px;color:#3f3f4d">Aug 2024</div>
<div class="t " style="left:367.40px;top:656.02px;font-size:10px;color:#3f3f4d">ABC123</div>
<div class="t " style="left:430px;top:656.02px;font-size:10px;color:#3f3f4d">Multiple</div>
<div class="t " style="left:547.40px;top:656.02px;font-size:10px;color:#3f3f4d">Rental Income Accrual</div>
<div class="t " style="left:805.20px;top:656.02px;font-size:10px;color:#3f3f4d">Celin Dione</div>
<svg class="abs" style="left:1356px;top:653.72px;" width="12" height="12" viewBox="0 0 12 12" fill="none"><path d="M4.2 2.2L1.4 4.5l2.8 2.3z" fill="#6258bf" stroke="#6258bf" stroke-width=".6" stroke-linejoin="round"/><path d="M3 4.5h4.2a2.5 2.5 0 0 1 0 5H5.6" stroke="#6258bf" stroke-width="1.35" stroke-linecap="round"/></svg>
<div class="fill" style="left:99.60px;top:706.30px;width:1275.40px;height:1px;background:#e4e4e4"></div>
<svg class="abs" style="left:108.70px;top:686.17px;" width="8" height="10" viewBox="0 0 8 10" fill="none"><path d="M2.6 2.2l2.8 2.8-2.8 2.8" stroke="#5a5a68" stroke-width="1.6" stroke-linecap="round" stroke-linejoin="round"/></svg>
<div class="t " style="left:136.60px;top:687.27px;font-size:10px;color:#3f3f4d">07/16/2024</div>
<div class="t " style="left:209.70px;top:687.27px;font-size:10px;color:#3f3f4d">07/22/2024</div>
<div class="t " style="left:297.20px;top:687.27px;font-size:10px;color:#3f3f4d">Jul 2024</div>
<div class="t " style="left:367.40px;top:687.27px;font-size:10px;color:#3f3f4d">ABC123</div>
<div class="t " style="left:430px;top:687.27px;font-size:10px;color:#3f3f4d">1234 Cedar Grove Ct</div>
<div class="t " style="left:547.40px;top:687.27px;font-size:10px;color:#3f3f4d">Interest Expense on Mortgage</div>
<div class="t " style="left:805.20px;top:687.27px;font-size:10px;color:#3f3f4d">Mike Tyson</div>
<svg class="abs" style="left:1356px;top:684.97px;" width="12" height="12" viewBox="0 0 12 12" fill="none"><path d="M4.2 2.2L1.4 4.5l2.8 2.3z" fill="#6258bf" stroke="#6258bf" stroke-width=".6" stroke-linejoin="round"/><path d="M3 4.5h4.2a2.5 2.5 0 0 1 0 5H5.6" stroke="#6258bf" stroke-width="1.35" stroke-linecap="round"/></svg>
<div class="fill" style="left:99.60px;top:737.55px;width:1275.40px;height:1px;background:#e4e4e4"></div>
<svg class="abs" style="left:108.70px;top:717.42px;" width="8" height="10" viewBox="0 0 8 10" fill="none"><path d="M2.6 2.2l2.8 2.8-2.8 2.8" stroke="#5a5a68" stroke-width="1.6" stroke-linecap="round" stroke-linejoin="round"/></svg>
<div class="t " style="left:136.60px;top:718.52px;font-size:10px;color:#3f3f4d">07/16/2024</div>
<div class="t " style="left:209.70px;top:718.52px;font-size:10px;color:#3f3f4d">07/22/2024</div>
<div class="t " style="left:297.20px;top:718.52px;font-size:10px;color:#3f3f4d">Jul 2024</div>
<div class="t " style="left:367.40px;top:718.52px;font-size:10px;color:#3f3f4d">ABC123</div>
<div class="t " style="left:430px;top:718.52px;font-size:10px;color:#3f3f4d">Multiple</div>
<div class="t " style="left:547.40px;top:718.52px;font-size:10px;color:#3f3f4d">Interest Expense on Mortgage</div>
<div class="t " style="left:805.20px;top:718.52px;font-size:10px;color:#3f3f4d">Mike Tyson</div>
<svg class="abs" style="left:1356px;top:716.22px;" width="12" height="12" viewBox="0 0 12 12" fill="none"><path d="M4.2 2.2L1.4 4.5l2.8 2.3z" fill="#6258bf" stroke="#6258bf" stroke-width=".6" stroke-linejoin="round"/><path d="M3 4.5h4.2a2.5 2.5 0 0 1 0 5H5.6" stroke="#6258bf" stroke-width="1.35" stroke-linecap="round"/></svg>
<div class="fill" style="left:99.60px;top:768.80px;width:1275.40px;height:1px;background:#e4e4e4"></div>
<svg class="abs" style="left:108.70px;top:748.67px;" width="8" height="10" viewBox="0 0 8 10" fill="none"><path d="M2.6 2.2l2.8 2.8-2.8 2.8" stroke="#5a5a68" stroke-width="1.6" stroke-linecap="round" stroke-linejoin="round"/></svg>
<div class="t " style="left:136.60px;top:749.77px;font-size:10px;color:#3f3f4d">07/16/2024</div>
<div class="t " style="left:209.70px;top:749.77px;font-size:10px;color:#3f3f4d">07/22/2024</div>
<div class="t " style="left:297.20px;top:749.77px;font-size:10px;color:#3f3f4d">Jul 2024</div>
<div class="t " style="left:367.40px;top:749.77px;font-size:10px;color:#3f3f4d">ABC123</div>
<div class="t " style="left:430px;top:749.77px;font-size:10px;color:#3f3f4d">1234 Saber Trl</div>
<div class="t " style="left:547.40px;top:749.77px;font-size:10px;color:#3f3f4d">Tenant Security Deposit Liability</div>
<div class="t " style="left:805.20px;top:749.77px;font-size:10px;color:#3f3f4d">Mike Tyson</div>
<svg class="abs" style="left:1356px;top:747.47px;" width="12" height="12" viewBox="0 0 12 12" fill="none"><path d="M4.2 2.2L1.4 4.5l2.8 2.3z" fill="#6258bf" stroke="#6258bf" stroke-width=".6" stroke-linejoin="round"/><path d="M3 4.5h4.2a2.5 2.5 0 0 1 0 5H5.6" stroke="#6258bf" stroke-width="1.35" stroke-linecap="round"/></svg>
<div class="fill" style="left:99.60px;top:800.05px;width:1275.40px;height:1px;background:#e4e4e4"></div>
<svg class="abs" style="left:108.70px;top:779.92px;" width="8" height="10" viewBox="0 0 8 10" fill="none"><path d="M2.6 2.2l2.8 2.8-2.8 2.8" stroke="#5a5a68" stroke-width="1.6" stroke-linecap="round" stroke-linejoin="round"/></svg>
<div class="t " style="left:136.60px;top:781.02px;font-size:10px;color:#3f3f4d">07/16/2024</div>
<div class="t " style="left:209.70px;top:781.02px;font-size:10px;color:#3f3f4d">07/22/2024</div>
<div class="t " style="left:297.20px;top:781.02px;font-size:10px;color:#3f3f4d">Jul 2024</div>
<div class="t " style="left:367.40px;top:781.02px;font-size:10px;color:#3f3f4d">ABC123</div>
<div class="t " style="left:430px;top:781.02px;font-size:10px;color:#3f3f4d">Multiple</div>
<div class="t " style="left:547.40px;top:781.02px;font-size:10px;color:#3f3f4d">Property Management Fees Accrual</div>
<div class="t " style="left:805.20px;top:781.02px;font-size:10px;color:#3f3f4d">Mike Tyson</div>
<svg class="abs" style="left:1356px;top:778.72px;" width="12" height="12" viewBox="0 0 12 12" fill="none"><path d="M4.2 2.2L1.4 4.5l2.8 2.3z" fill="#6258bf" stroke="#6258bf" stroke-width=".6" stroke-linejoin="round"/><path d="M3 4.5h4.2a2.5 2.5 0 0 1 0 5H5.6" stroke="#6258bf" stroke-width="1.35" stroke-linecap="round"/></svg>
<div class="fill" style="left:99.50px;top:425.25px;width:1.50px;height:62.80px;background:#7a6ec4"></div>
</div>
</body></html>
